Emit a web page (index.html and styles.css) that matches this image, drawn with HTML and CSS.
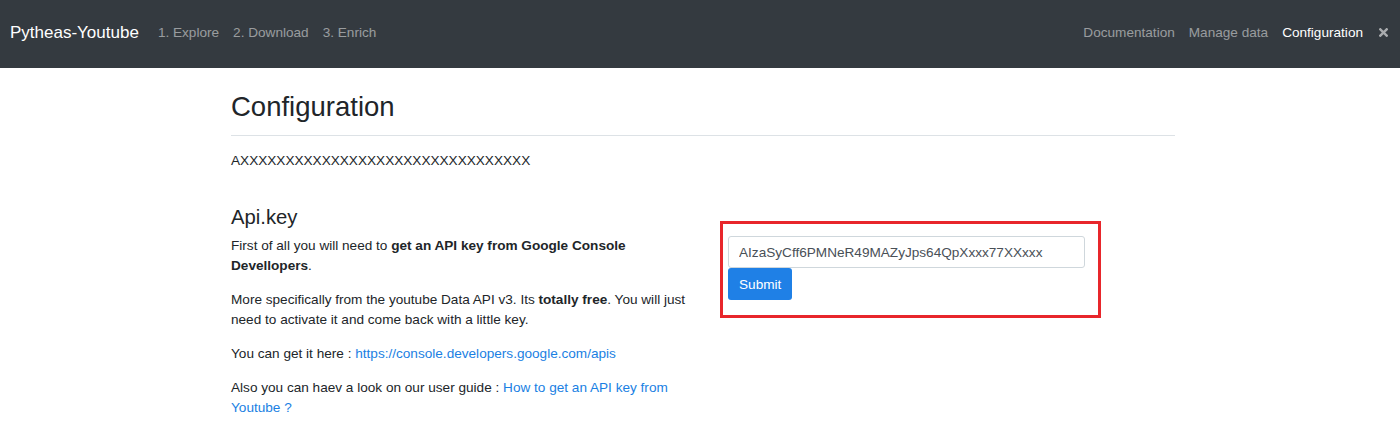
FILE: index.html
```html
<!DOCTYPE html>
<html lang="en">
<head>
<meta charset="utf-8">
<title>Pytheas-Youtube - Configuration</title>
<link rel="stylesheet" href="styles.css">
</head>
<body>
<nav class="navbar">
  <a class="brand" href="#">Pytheas-Youtube</a>
  <ul class="nav nav-left">
    <li><a href="#">1. Explore</a></li>
    <li><a href="#">2. Download</a></li>
    <li><a href="#">3. Enrich</a></li>
  </ul>
  <ul class="nav nav-right">
    <li><a href="#">Documentation</a></li>
    <li><a href="#">Manage data</a></li>
    <li><a class="active" href="#">Configuration</a></li>
    <li><a class="close" href="#" aria-label="close"><svg width="9" height="9" viewBox="0 0 9 9"><path d="M1.3 1.3 L7.7 7.7 M7.7 1.3 L1.3 7.7" stroke="#a9abae" stroke-width="2.4" stroke-linecap="square"/></svg></a></li>
  </ul>
</nav>
<main class="container">
  <h1 class="title">Configuration</h1>
  <hr class="rule">
  <p class="key-current">AXXXXXXXXXXXXXXXXXXXXXXXXXXXXXXXX</p>
  <div class="row">
    <section class="col-left">
      <h2 class="subtitle">Api.key</h2>
      <p>First of all you will need to <strong>get an API key from Google Console Devellopers</strong>.</p>
      <p>More specifically from the youtube Data API v3. Its <strong>totally free</strong>. You will just need to activate it and come back with a little key.</p>
      <p>You can get it here : <a href="#">https://console.developers.google.com/apis</a></p>
      <p>Also you can haev a look on our user guide : <a href="#">How to get an API key from Youtube ?</a></p>
    </section>
    <section class="col-right">
      <form class="key-form">
        <input class="form-control" type="text" value="AIzaSyCff6PMNeR49MAZyJps64QpXxxx77XXxxx">
        <button class="btn" type="button">Submit</button>
      </form>
    </section>
  </div>
</main>
</body>
</html>
```
FILE: styles.css
```css
* { box-sizing: border-box; }
html, body { margin: 0; padding: 0; }
body {
  font-family: "Liberation Sans", Arial, sans-serif;
  font-size: 13.6px;
  line-height: 20px;
  color: #212529;
  background: #fff;
}
a { color: #1a7fe3; text-decoration: none; }

.navbar {
  height: 68px;
  background: #343a40;
  display: flex;
  align-items: center;
  padding: 0 12px 3px 10px;
}
.brand {
  color: #fff;
  font-size: 17px;
  margin-right: 12px;
}
.nav {
  list-style: none;
  margin: 0;
  padding: 0;
  display: flex;
  align-items: center;
}
.nav-right { margin-left: auto; }
.nav a {
  display: block;
  padding: 0 7px;
  color: rgba(255, 255, 255, 0.5);
  font-size: 13.6px;
}
.nav a.active { color: #fff; }
.nav a.close { padding: 0 0 0 9px; display: flex; align-items: center; }

.container {
  width: 944px;
  margin: 0 auto;
  position: relative;
  left: 3px;
}
.title {
  font-size: 27.5px;
  font-weight: 400;
  line-height: 34px;
  margin: 22px 0 0 0;
}
.rule {
  border: 0;
  border-top: 1px solid #dde2e6;
  margin: 11px 0 0 0;
}
.key-current {
  margin: 15px 0 0 0;
  line-height: 20px;
}
.row {
  display: flex;
  align-items: flex-start;
}
.col-left {
  width: 470px;
}
.col-left p { margin: 0 0 14px 0; }
.subtitle {
  font-size: 20.3px;
  font-weight: 400;
  line-height: 24px;
  margin: 34px 0 7px 0;
}
.col-right {
  margin-left: 19px;
  margin-top: 50px;
}
.key-form {
  width: 381px;
  border: 3px solid #e8262b;
  padding: 12px 13px 15px 5px;
}
.form-control {
  display: block;
  width: 100%;
  height: 32px;
  padding: 4px 10px;
  font-family: inherit;
  font-size: 13.6px;
  color: #495057;
  border: 1px solid #cfd7dc;
  border-radius: 3px;
  background: #fff;
}
.btn {
  display: block;
  height: 32px;
  padding: 0 11px;
  font-family: inherit;
  font-size: 13.6px;
  color: #fff;
  background: #1f80e6;
  border: 0;
  border-radius: 3px;
}
```
